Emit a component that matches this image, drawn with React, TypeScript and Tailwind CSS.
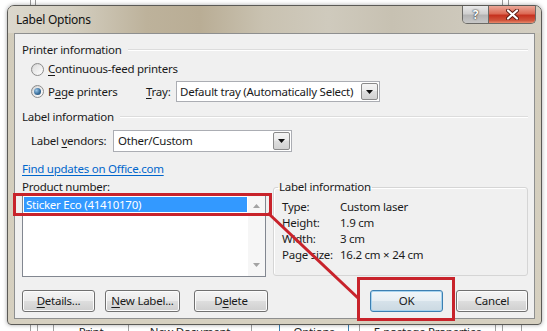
import React from "react";

const U = ({ children }: { children: React.ReactNode }) => (
  <span className="underline decoration-[1px] underline-offset-[2px]">{children}</span>
);

function Radio({ checked }: { checked?: boolean }) {
  return (
    <span className="flex h-[13px] w-[13px] shrink-0 items-center justify-center rounded-full border border-[#8c8c8c] bg-[linear-gradient(135deg,#cfcfcf_0%,#eeeeee_60%,#ffffff_100%)]">
      <span className="flex h-[9px] w-[9px] items-center justify-center rounded-full bg-[linear-gradient(135deg,#dedede,#fbfbfb)]">
        {checked && (
          <span className="h-[7px] w-[7px] rounded-full bg-[radial-gradient(circle_at_35%_35%,#9cc8ea_0%,#3a6f9c_55%,#1d3f62_100%)]" />
        )}
      </span>
    </span>
  );
}

function DropBtn() {
  return (
    <span className="my-[1px] mr-[1px] flex w-[17px] shrink-0 items-center justify-center rounded-[2px] border border-[#8a8a8a] bg-[linear-gradient(#f5f5f5_0%,#ececec_45%,#dedede_50%,#d2d2d2_100%)]">
      <svg width="7" height="4" viewBox="0 0 7 4">
        <path d="M0 0H7L3.5 4Z" fill="#111" />
      </svg>
    </span>
  );
}

function Header({ children }: { children: React.ReactNode }) {
  return (
    <div className="flex h-[16px] items-center leading-[16px]">
      <span>{children}</span>
      <div className="ml-[6px] h-0 flex-1 border-t border-b border-t-[#dcdcdc] border-b-white" />
    </div>
  );
}

function Btn({ children, className }: { children: React.ReactNode; className: string }) {
  return (
    <div
      className={`flex h-[22px] items-center justify-center rounded-[3px] border border-[#707070] bg-[linear-gradient(#f4f4f4_0%,#ebebeb_48%,#dddddd_52%,#cfcfcf_100%)] shadow-[inset_0_0_0_1px_#fcfcfc] ${className}`}
    >
      {children}
    </div>
  );
}

export default function App() {
  return (
    <div className="relative h-[331px] w-[547px] overflow-hidden whitespace-nowrap bg-white font-['Noto_Sans',sans-serif] text-[11.5px] tracking-[-0.25px] text-[#1a1a1a]">
      {/* underlying application */}
      <div className="flex h-[331px] flex-col">
        <div className="flex h-[6px]">
          <div className="w-[30px]" />
          <div className="w-[5px] border-l border-[#9a9a9a]" />
          <div className="w-[467px] border-l border-[#9a9a9a]" />
          <div className="w-[6px] border-l border-[#9a9a9a]" />
          <div className="border-l border-[#9a9a9a]" />
        </div>
        <div className="flex-1" />
        <div className="flex h-[9px] items-start overflow-hidden leading-[16px] text-[#222]">
          <div className="w-[30px]" />
          <div className="h-full w-[7px] border-l border-[#a0a0a0]" />
          <div className="h-full w-[16px] border-l border-[#a0a0a0]" />
          <div className="h-full w-[75px] border-l border-[#a0a0a0] pt-[2px] text-center">Print</div>
          <div className="h-full w-[123px] border-l border-[#a0a0a0] pt-[2px] text-center">New Document</div>
          <div className="h-full w-[28px] border-l border-[#a0a0a0]" />
          <div className="h-full w-[70px] border-x border-[#3c7fb1] pt-[2px] text-center">Options</div>
          <div className="h-full w-[10px]" />
          <div className="h-full w-[136px] border-l border-[#a0a0a0] pt-[2px] text-center">E-postage Properties</div>
          <div className="h-full w-[7px] border-l border-[#a0a0a0]" />
          <div className="h-full w-[19px] border-l border-[#a0a0a0]" />
          <div className="h-full border-l border-[#a0a0a0]" />
        </div>
      </div>

      {/* dialog window */}
      <div className="absolute left-[7px] top-[5px] flex h-[320px] w-[535px] flex-col rounded-t-[7px] rounded-b-[4px] border border-[#5b5a56] bg-[linear-gradient(#d2ccbb,#d6d0c0)] shadow-[0_0_4px_rgba(0,0,0,0.35)]">
        {/* title bar */}
        <div className="flex h-[27px] rounded-t-[6px] bg-[linear-gradient(90deg,#dcd8cd_0%,#d3cec0_12%,#bdb29b_26%,#b9ad95_36%,#c9c2b1_48%,#cfcabd_60%,#c7c1b2_72%,#cdc8bb_85%,#d4cfc2_100%)]">
          <div className="flex-1 pl-[8px] pt-[6px] text-[12px] leading-[16px] text-[#111]">Label Options</div>
          <div className="mr-[5px] flex h-[18px] overflow-hidden rounded-b-[5px] border border-t-0 border-[#6b6a66]">
            <div className="flex w-[26px] items-center justify-center border-r border-[#6b6a66] bg-[linear-gradient(#e9e9e9_0%,#d0d0d0_45%,#b4b4b4_55%,#c8c8c8_100%)] text-[12px] font-bold leading-none text-white [text-shadow:0_0_1px_#222,0_0_2px_#333]">
              ?
            </div>
            <div className="flex w-[46px] items-center justify-center bg-[linear-gradient(#eba898_0%,#dc6a55_45%,#c6321f_55%,#d0543c_85%,#e88a6c_100%)]">
              <svg width="13" height="11" viewBox="0 0 13 11">
                <path d="M2 1.5L11 9.5M11 1.5L2 9.5" stroke="#5a1a12" strokeWidth="4" strokeLinecap="round" />
                <path d="M2 1.5L11 9.5M11 1.5L2 9.5" stroke="#ffffff" strokeWidth="2.2" strokeLinecap="round" />
              </svg>
            </div>
          </div>
        </div>

        {/* client area */}
        <div className="mx-[6px] flex h-[286px] flex-col border border-[#8e8f8f] bg-[#f0f0f0] pl-[7px] pr-[6px]">
          <div className="mt-[8px]">
            <Header>Printer information</Header>
          </div>
          <div className="mt-[3px] flex h-[16px] items-center pl-[9px] leading-[16px]">
            <Radio />
            <span className="ml-[4px]">
              <U>C</U>ontinuous-feed printers
            </span>
          </div>
          <div className="mt-[4px] flex h-[21px] items-center pl-[9px] leading-[16px]">
            <div className="flex w-[115px] items-center">
              <Radio checked />
              <span className="ml-[4px]">
                P<U>a</U>ge printers
              </span>
            </div>
            <span className="w-[30px]">
              <U>T</U>ray:
            </span>
            <div className="flex h-[21px] w-[204px] border border-[#abadb3] bg-white">
              <span className="flex-1 overflow-hidden pl-[3px] leading-[19px]">Default tray (Automatically Select)</span>
              <DropBtn />
            </div>
          </div>
          <div className="mt-[7px]">
            <Header>Label information</Header>
          </div>
          <div className="mt-[5px] flex h-[22px] items-center pl-[9px] leading-[16px]">
            <span className="w-[82px]">
              Label <U>v</U>endors:
            </span>
            <div className="flex h-[22px] w-[179px] border border-[#abadb3] bg-white">
              <span className="flex-1 pl-[4px] leading-[20px]">Other/Custom</span>
              <DropBtn />
            </div>
          </div>
          <div className="mt-[9px] h-[16px] leading-[16px]">
            <span className="text-[#0066cc] underline decoration-[1px] underline-offset-[2px]">Find updates on Office.com</span>
          </div>
          <div className="mt-[2px] flex">
            <div className="flex w-[244px] flex-col">
              <div className="h-[15px] leading-[15px]">Product number:</div>
              <div className="flex h-[83px] border border-[#828790] bg-white">
                <div className="flex-1 py-[2px] pl-[1px] pr-[1px]">
                  <div className="h-[15px] bg-[#3399ff] pl-[2px] leading-[15px] text-white">Sticker Eco (41410170)</div>
                </div>
                <div className="flex w-[17px] flex-col items-center justify-between bg-[#f6f6f6] py-[9px]">
                  <svg width="7" height="4" viewBox="0 0 7 4">
                    <path d="M0 4H7L3.5 0Z" fill="#a3a3a3" />
                  </svg>
                  <svg width="7" height="4" viewBox="0 0 7 4">
                    <path d="M0 0H7L3.5 4Z" fill="#a3a3a3" />
                  </svg>
                </div>
              </div>
            </div>
            <fieldset className="ml-[7px] h-[97px] w-[255px] rounded-[3px] border border-[#d5d5d5] px-[8px] leading-[16px] shadow-[inset_1px_1px_0_#ffffff]">
              <legend className="-ml-[4px] px-[1px]">Label information</legend>
              <div className="mt-[4px] flex flex-col">
                <div className="flex">
                  <span className="w-[58px]">Type:</span>
                  <span>Custom laser</span>
                </div>
                <div className="flex">
                  <span className="w-[58px]">Height:</span>
                  <span>1.9 cm</span>
                </div>
                <div className="flex">
                  <span className="w-[58px]">Width:</span>
                  <span>3 cm</span>
                </div>
                <div className="flex">
                  <span className="w-[58px]">Page size:</span>
                  <span>16.2 cm × 24 cm</span>
                </div>
              </div>
            </fieldset>
          </div>
          <div className="mt-[13px] flex leading-[16px]">
            <Btn className="w-[73px]">
              <span>
                <U>D</U>etails...
              </span>
            </Btn>
            <Btn className="ml-[10px] w-[75px]">
              <span>
                <U>N</U>ew Label...
              </span>
            </Btn>
            <Btn className="ml-[14px] w-[74px]">
              <span>
                D<U>e</U>lete
              </span>
            </Btn>
            <div className="flex-1" />
            <div className="flex h-[22px] w-[73px] items-center justify-center rounded-[3px] border border-[#3c7fb1] bg-[linear-gradient(#f1f6f9_0%,#e6eef3_48%,#d6e2ea_52%,#cbd9e2_100%)] shadow-[inset_0_0_0_1px_#a6d3ef]">
              OK
            </div>
            <Btn className="ml-[13px] w-[72px]">
              <span>Cancel</span>
            </Btn>
          </div>
        </div>
      </div>

      {/* red annotations */}
      <div className="absolute left-[13px] top-[193px] h-[23px] w-[259px] border-[3px] border-[#c8232b]" />
      <div className="absolute left-[357px] top-[277px] h-[44px] w-[98px] border-[3px] border-[#c8232b]" />
      <svg className="pointer-events-none absolute left-0 top-0" width="547" height="331" viewBox="0 0 547 331">
        <line x1="268" y1="213" x2="358" y2="298" stroke="#c8232b" strokeWidth="3" />
      </svg>
    </div>
  );
}
